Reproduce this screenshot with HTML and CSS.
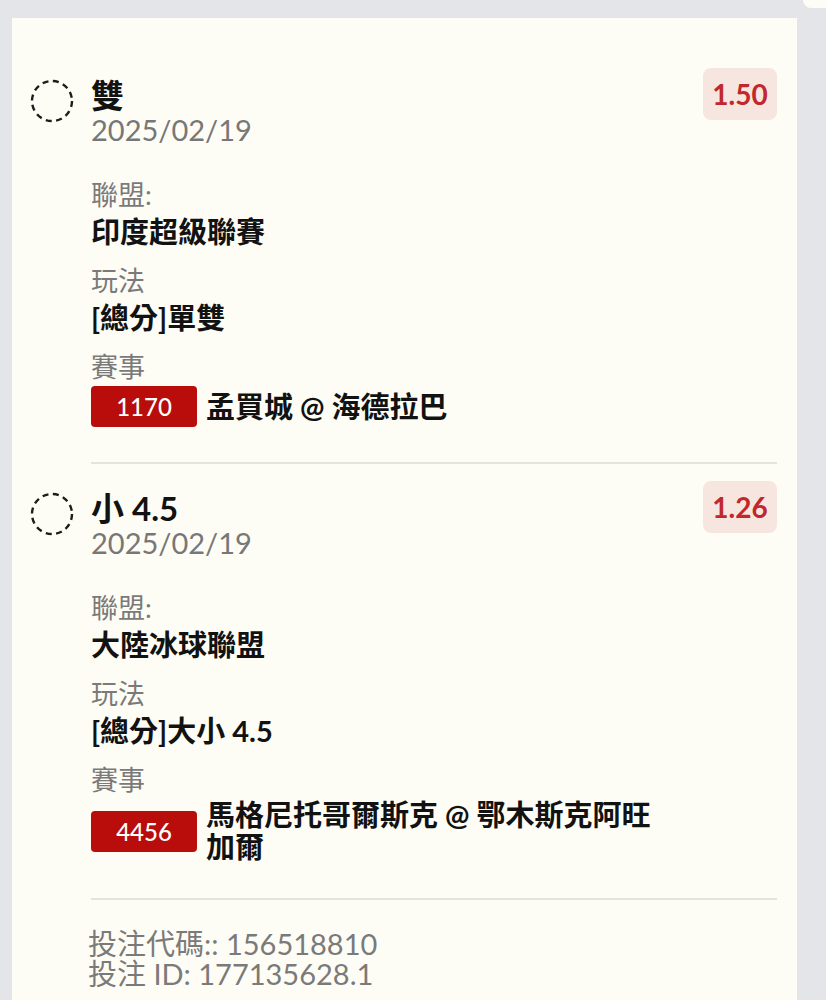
FILE: index.html
```html
<!DOCTYPE html>
<html>

<head>
    <title>投注單</title>
    <link rel="stylesheet" href="styles.css">
</head>

<body>
    <div class="peek"></div>

    <div class="card">

        <div class="bet">
            <svg class="bet-check" width="44" height="44" viewBox="0 0 44 44">
                <circle cx="22" cy="22" r="20" fill="none" stroke="#1c1c1c" stroke-width="2.4" stroke-dasharray="6 4.5" />
            </svg>
            <div class="bet-body">
                <div class="bet-head">
                    <div class="bet-info">
                        <div class="bet-title">雙</div>
                        <div class="bet-date">2025/02/19</div>

                        <div class="fields">
                            <div class="field">
                                <div class="field-label">聯盟:</div>
                                <div class="field-value">印度超級聯賽</div>
                            </div>
                            <div class="field">
                                <div class="field-label">玩法</div>
                                <div class="field-value">[總分]單雙</div>
                            </div>
                            <div class="field">
                                <div class="field-label">賽事</div>
                                <div class="match">
                                    <span class="match-no">1170</span>
                                    <span class="match-name">孟買城 @ 海德拉巴</span>
                                </div>
                            </div>
                        </div>
                    </div>
                    <div class="bet-odds">1.50</div>
                </div>
            </div>
        </div>

        <div class="bet">
            <svg class="bet-check" width="44" height="44" viewBox="0 0 44 44">
                <circle cx="22" cy="22" r="20" fill="none" stroke="#1c1c1c" stroke-width="2.4" stroke-dasharray="6 4.5" />
            </svg>
            <div class="bet-body">
                <div class="bet-head">
                    <div class="bet-info">
                        <div class="bet-title">小 4.5</div>
                        <div class="bet-date">2025/02/19</div>

                        <div class="fields">
                            <div class="field">
                                <div class="field-label">聯盟:</div>
                                <div class="field-value">大陸冰球聯盟</div>
                            </div>
                            <div class="field">
                                <div class="field-label">玩法</div>
                                <div class="field-value">[總分]大小 4.5</div>
                            </div>
                            <div class="field">
                                <div class="field-label">賽事</div>
                                <div class="match">
                                    <span class="match-no">4456</span>
                                    <span class="match-name">馬格尼托哥爾斯克 @ 鄂木斯克阿旺加爾</span>
                                </div>
                            </div>
                        </div>
                    </div>
                    <div class="bet-odds">1.26</div>
                </div>
            </div>
        </div>

        <div class="footer">
            <div>投注代碼:: 156518810</div>
            <div>投注 ID: 177135628.1</div>
        </div>

    </div>
</body>

</html>
```

FILE: styles.css
```css
body {
    font-family: Lato, "Noto Sans CJK TC", sans-serif;
    background-color: #e4e5e9;
    margin: 0;
    padding: 0;
    position: relative;
}

.peek {
    position: absolute;
    top: 0;
    right: 0;
    width: 23px;
    height: 8px;
    background-color: #fefdf5;
    border-bottom-left-radius: 14px;
}

.card {
    margin: 18px 29px 0 12px;
    padding: 33px 20px 40px 18px;
    background-color: #fefdf5;
    color: #121212;
}

.bet {
    display: flex;
    gap: 17px;
    padding-top: 17px;
}

.bet-check {
    flex-shrink: 0;
    margin-top: 11px;
}

.bet-body {
    flex: 1;
    padding-bottom: 35px;
    border-bottom: 2px solid #e4e3dd;
}

.bet-head {
    display: flex;
    align-items: flex-start;
    gap: 30px;
}

.bet-info {
    flex: 1;
    padding-top: 7px;
}

.bet-title {
    font-size: 33px;
    font-weight: bold;
    line-height: 40px;
}

.bet-date {
    font-size: 29px;
    line-height: 30px;
    color: #777;
}

.bet-odds {
    width: 74px;
    height: 52px;
    line-height: 52px;
    text-align: center;
    font-size: 28px;
    font-weight: bold;
    color: #c1272b;
    background-color: #f7e6df;
    border-radius: 8px;
}

.fields {
    padding-top: 19px;
}

.field {
    margin-top: 12px;
}

.field-label {
    font-size: 27px;
    line-height: 37px;
    color: #7a7a7a;
}

.field-value {
    font-size: 29px;
    line-height: 37px;
    font-weight: bold;
}

.match {
    display: flex;
    align-items: center;
    gap: 9px;
    padding-top: 1px;
}

.match-no {
    flex-shrink: 0;
    width: 106px;
    height: 41px;
    line-height: 41px;
    text-align: center;
    font-size: 24px;
    font-weight: 500;
    color: #fff;
    background-color: #b80d0b;
    border-radius: 4px;
}

.match-name {
    font-size: 29px;
    line-height: 32px;
    font-weight: bold;
}

.footer {
    padding: 29px 0 0 58px;
    font-size: 29px;
    line-height: 30px;
    color: #7a7a7a;
}
```
